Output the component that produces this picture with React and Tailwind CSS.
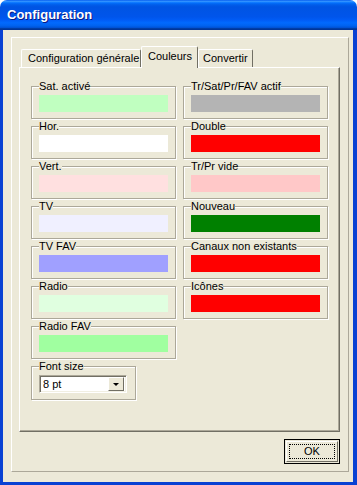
import React from 'react'

const left = [
  { label: 'Sat. activé', color: 'bg-[#c0ffc0]' },
  { label: 'Hor.', color: 'bg-white' },
  { label: 'Vert.', color: 'bg-[#ffe0e0]' },
  { label: 'TV', color: 'bg-[#f0f0ff]' },
  { label: 'TV FAV', color: 'bg-[#a0a0ff]' },
  { label: 'Radio', color: 'bg-[#e0ffe0]' },
  { label: 'Radio FAV', color: 'bg-[#a0ffa0]' },
]

const right = [
  { label: 'Tr/Sat/Pr/FAV actif', color: 'bg-[#b4b4b4]' },
  { label: 'Double', color: 'bg-[#ff0000]' },
  { label: 'Tr/Pr vide', color: 'bg-[#ffc8c8]' },
  { label: 'Nouveau', color: 'bg-[#008000]' },
  { label: 'Canaux non existants', color: 'bg-[#ff0000]' },
  { label: 'Icônes', color: 'bg-[#ff0000]' },
]

const Group = ({ label, className, children }) => (
  <fieldset
    className={`border border-[#aca899] shadow-[inset_1px_1px_0_#fff,1px_1px_0_#fff] pl-[7px] pt-[2px] pb-[6px] ${className}`}
  >
    <legend className="bg-[#ece9d8] p-0 leading-[13px]">{label}</legend>
    {children}
  </fieldset>
)

const Swatch = ({ label, color }) => (
  <Group label={label} className="w-[145px] pr-[7px]">
    <div className={`h-[17px] ${color}`}></div>
  </Group>
)

export default function App() {
  return (
    <div className="w-[357px] h-[485px] flex flex-col font-['Liberation_Sans',Arial,sans-serif] text-[11px] text-black bg-white">
      {/* title bar */}
      <div className="h-[30px] rounded-t-[7px] flex items-center pl-[7px] bg-[linear-gradient(180deg,#0058ee_0%,#3593ff_4%,#288eff_6%,#127dff_8%,#036ffc_10%,#0262ee_14%,#0057e5_20%,#0054e3_24%,#0055eb_56%,#005bf5_66%,#026afe_76%,#0062ef_86%,#0052d6_92%,#0040ab_94%,#003092_100%)]">
        <span className="text-white font-bold text-[13px] [text-shadow:1px_1px_0_#0a1883]">Configuration</span>
      </div>

      {/* body */}
      <div className="flex-1 bg-[#ece9d8] border-l-[3px] border-r-[4px] border-b-[3px] border-[#0841d3] pt-[7px] pl-[8px] pr-[4px] pb-[10px] flex">
        <div className="flex-1 flex flex-col border border-t-white border-l-white border-r-[#aca899] border-b-[#aca899] pt-[7px] pl-[7px] pr-[8px] pb-[7px]">
          {/* tabs */}
          <div className="flex items-end pl-[2px] h-[22px] relative z-10">
            <div className="w-[120px] h-[18px] border-t border-l border-white border-r border-r-[#716f64] rounded-t-[2px] pl-[6px] leading-[16px]">
              Configuration générale
            </div>
            <div className="w-[57px] h-[22px] mb-[-1px] bg-[#ece9d8] border-t border-l border-white border-r border-r-[#716f64] rounded-t-[2px] pl-[6px] leading-[18px]">
              Couleurs
            </div>
            <div className="w-[55px] h-[18px] border-t border-l border-white border-r border-r-[#716f64] rounded-t-[2px] pl-[4px] leading-[16px]">
              Convertir
            </div>
          </div>

          {/* tab panel */}
          <div className="flex-1 border border-t-white border-l-white border-r-[#716f64] border-b-[#716f64] shadow-[inset_-1px_-1px_0_#aca899] pl-[11px] pt-[12px] flex gap-[7px]">
            <div className="flex flex-col gap-[1px]">
              {left.map((s) => (
                <Swatch key={s.label} {...s} />
              ))}
              <Group label="Font size" className="w-[105px] pr-[8px]">
                <div className="w-[88px] h-[18px] bg-white border border-t-[#aca899] border-l-[#aca899] border-b-white border-r-white shadow-[inset_1px_1px_0_#716f64,inset_-1px_-1px_0_#f1efe2] flex items-center justify-between pl-[3px] pr-[2px]">
                  <span className="leading-[13px]">8 pt</span>
                  <div className="w-[16px] h-[14px] bg-[#ece9d8] border border-t-white border-l-white border-r-[#716f64] border-b-[#716f64] flex items-center justify-center">
                    <div className="w-0 h-0 border-l-[3px] border-r-[3px] border-t-[3px] border-l-transparent border-r-transparent border-t-black"></div>
                  </div>
                </div>
              </Group>
            </div>
            <div className="flex flex-col gap-[1px]">
              {right.map((s) => (
                <Swatch key={s.label} {...s} />
              ))}
            </div>
          </div>

          {/* footer */}
          <div className="flex justify-end pt-[7px]">
            <button className="w-[56px] h-[25px] border border-black bg-[#ece9d8] p-[1px]">
              <div className="w-full h-full border border-t-white border-l-white border-r-[#716f64] border-b-[#716f64] p-[2px]">
                <div className="w-full h-full border border-dotted border-black flex items-center justify-center leading-none">
                  OK
                </div>
              </div>
            </button>
          </div>
        </div>
      </div>
    </div>
  )
}
